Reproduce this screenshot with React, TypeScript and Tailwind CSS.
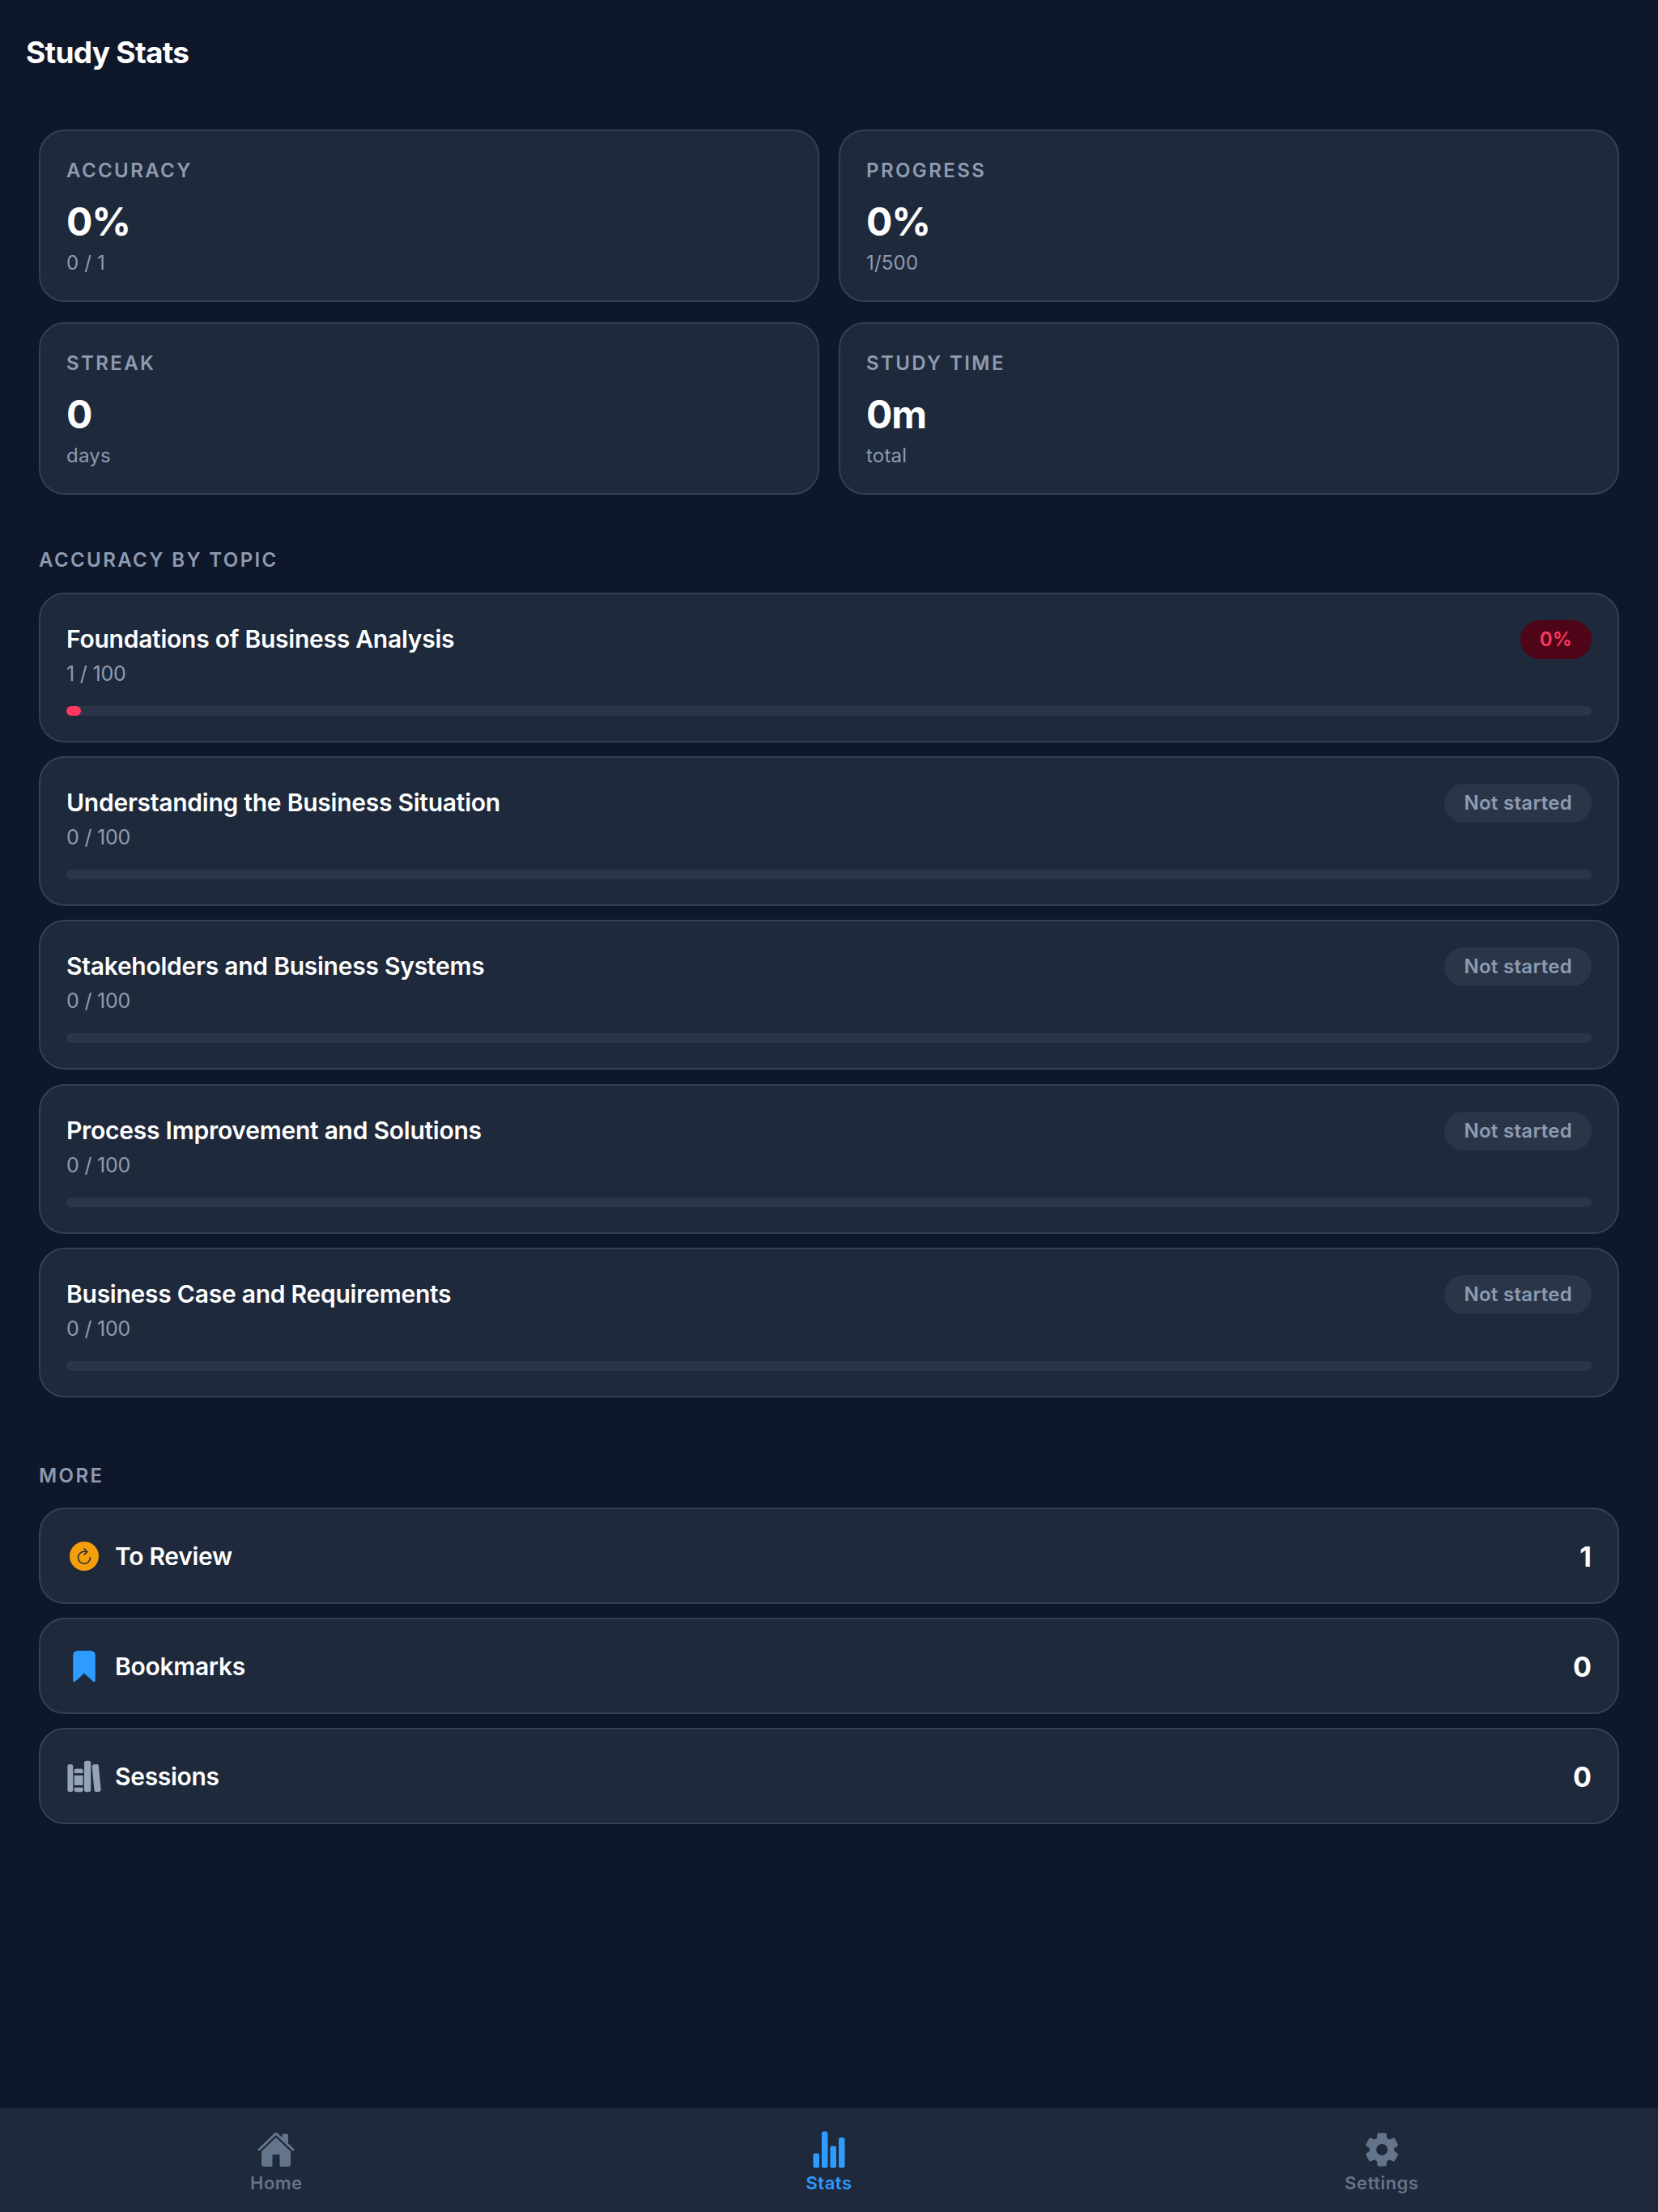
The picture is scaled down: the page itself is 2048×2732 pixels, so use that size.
import { IoHome, IoStatsChart, IoRefresh, IoBookmark, IoLibrary } from "react-icons/io5";

const stats = [
  { label: "ACCURACY", value: "0%", sub: "0 / 1" },
  { label: "PROGRESS", value: "0%", sub: "1/500" },
  { label: "STREAK", value: "0", sub: "days" },
  { label: "STUDY TIME", value: "0m", sub: "total" },
];

const topics = [
  { name: "Foundations of Business Analysis", count: "1 / 100", badge: "0%", fill: true },
  { name: "Understanding the Business Situation", count: "0 / 100", badge: "Not started", fill: false },
  { name: "Stakeholders and Business Systems", count: "0 / 100", badge: "Not started", fill: false },
  { name: "Process Improvement and Solutions", count: "0 / 100", badge: "Not started", fill: false },
  { name: "Business Case and Requirements", count: "0 / 100", badge: "Not started", fill: false },
];

// six tooth gear, plain round hole
function Gear() {
  const pts: string[] = [];
  for (let i = 0; i < 6; i++) {
    const a = -90 + i * 60;
    [[-21, 14.5], [-13, 20], [13, 20], [21, 14.5]].forEach(([d, r]) => {
      const t = ((a + d) * Math.PI) / 180;
      pts.push((24 + r * Math.cos(t)).toFixed(2) + " " + (24 + r * Math.sin(t)).toFixed(2));
    });
  }
  const d = "M" + pts.join("L") + "Z M24 16a8 8 0 1 0 0 16a8 8 0 1 0 0-16Z";
  return (
    <svg width="48" height="48" viewBox="0 0 48 48">
      <path d={d} fill="currentColor" fillRule="evenodd" stroke="currentColor" strokeWidth="2" strokeLinejoin="round" />
    </svg>
  );
}

export default function App() {
  return (
    <div className="flex h-[2732px] w-[2048px] flex-col bg-[#0f172a] font-['Inter',sans-serif] text-white">
      <h1 className="px-8 pt-[43px] text-[37px] leading-[44px] font-bold tracking-[-0.7px]">Study Stats</h1>

      <div className="mt-[73px] grid grid-cols-2 gap-x-6 gap-y-[25px] px-12">
        {stats.map((s) => (
          <div key={s.label} className="h-[213px] rounded-[32px] border-2 border-[#334155] bg-[#1e293b] px-8 pt-[34px]">
            <div className="text-[24px] leading-[30px] font-semibold tracking-[2.4px] text-[#8e9bb0]">{s.label}</div>
            <div className="mt-[16px] text-[48px] leading-[64px] font-bold tracking-[-1.2px]">{s.value}</div>
            <div className="mt-[3px] text-[24px] leading-[32px] tracking-[0.2px] text-[#8e9bb0]">{s.sub}</div>
          </div>
        ))}
      </div>

      <h2 className="mt-[66px] px-12 text-[24px] leading-[30px] font-semibold tracking-[2.4px] text-[#8e9bb0]">ACCURACY BY TOPIC</h2>
      <div className="mt-[25px] flex flex-col gap-[17.2px] px-12">
        {topics.map((t) => (
          <div key={t.name} className="h-[185px] rounded-[32px] border-2 border-[#334155] bg-[#1e293b] px-8 pt-8">
            <div className="flex items-start justify-between">
              <div>
                <div className="text-[30px] leading-[46px] font-semibold tracking-[-0.25px]">{t.name}</div>
                <div className="mt-[2px] text-[25px] leading-[36px] tracking-[-0.2px] text-[#8e9bb0]">{t.count}</div>
              </div>
              {t.fill ? (
                <span className="rounded-full bg-[#4f0518] px-6 text-[24px] leading-[48px] font-semibold tracking-[0.2px] text-[#ff375f]">{t.badge}</span>
              ) : (
                <span className="rounded-full bg-[#2a3648] px-6 text-[24px] leading-[48px] font-semibold tracking-[0.3px] text-[#8e9bb0]">{t.badge}</span>
              )}
            </div>
            <div className="mt-[22px] h-3 rounded-full bg-[#2a3648]">
              {t.fill && <div className="h-3 w-[18px] rounded-full bg-[#ff375f]" />}
            </div>
          </div>
        ))}
      </div>

      <h2 className="mt-[82px] px-12 text-[24px] leading-[30px] font-semibold tracking-[2.4px] text-[#8e9bb0]">MORE</h2>
      <div className="mt-[24px] flex flex-col gap-[17px] px-12">
        <Row
          icon={
            <span className="flex h-9 w-9 items-center justify-center rounded-full bg-[#f59e0b]">
              <IoRefresh size={24} color="#1e293b" />
            </span>
          }
          label="To Review"
          count="1"
        />
        <Row icon={<IoBookmark size={44} color="#2e9bff" />} label="Bookmarks" count="0" />
        <Row icon={<IoLibrary size={44} color="#94a3b8" />} label="Sessions" count="0" />
      </div>

      <div className="mt-auto flex h-[128px] bg-[#1e293b]">
        <Tab icon={<IoHome size={48} />} label="Home" />
        <Tab icon={<IoStatsChart size={48} />} label="Stats" active />
        <Tab icon={<Gear />} label="Settings" />
      </div>
    </div>
  );
}

function Row({ icon, label, count }: { icon: React.ReactNode; label: string; count: string }) {
  return (
    <div className="flex h-[119px] items-center rounded-[32px] border-2 border-[#334155] bg-[#1e293b] px-8 pt-[2px]">
      <span className="flex w-11 justify-center">{icon}</span>
      <span className="ml-4 text-[30px] font-semibold tracking-[-0.3px]">{label}</span>
      <span className="ml-auto text-[34px] font-bold">{count}</span>
    </div>
  );
}

function Tab({ icon, label, active }: { icon: React.ReactNode; label: string; active?: boolean }) {
  return (
    <div className={active ? "flex flex-1 flex-col items-center pt-[27px] text-[#2e9bff]" : "flex flex-1 flex-col items-center pt-[27px] text-[#64748b]"}>
      {icon}
      <span className="mt-[2px] text-[22px] leading-[30px] font-semibold tracking-[0.5px]">{label}</span>
    </div>
  );
}
